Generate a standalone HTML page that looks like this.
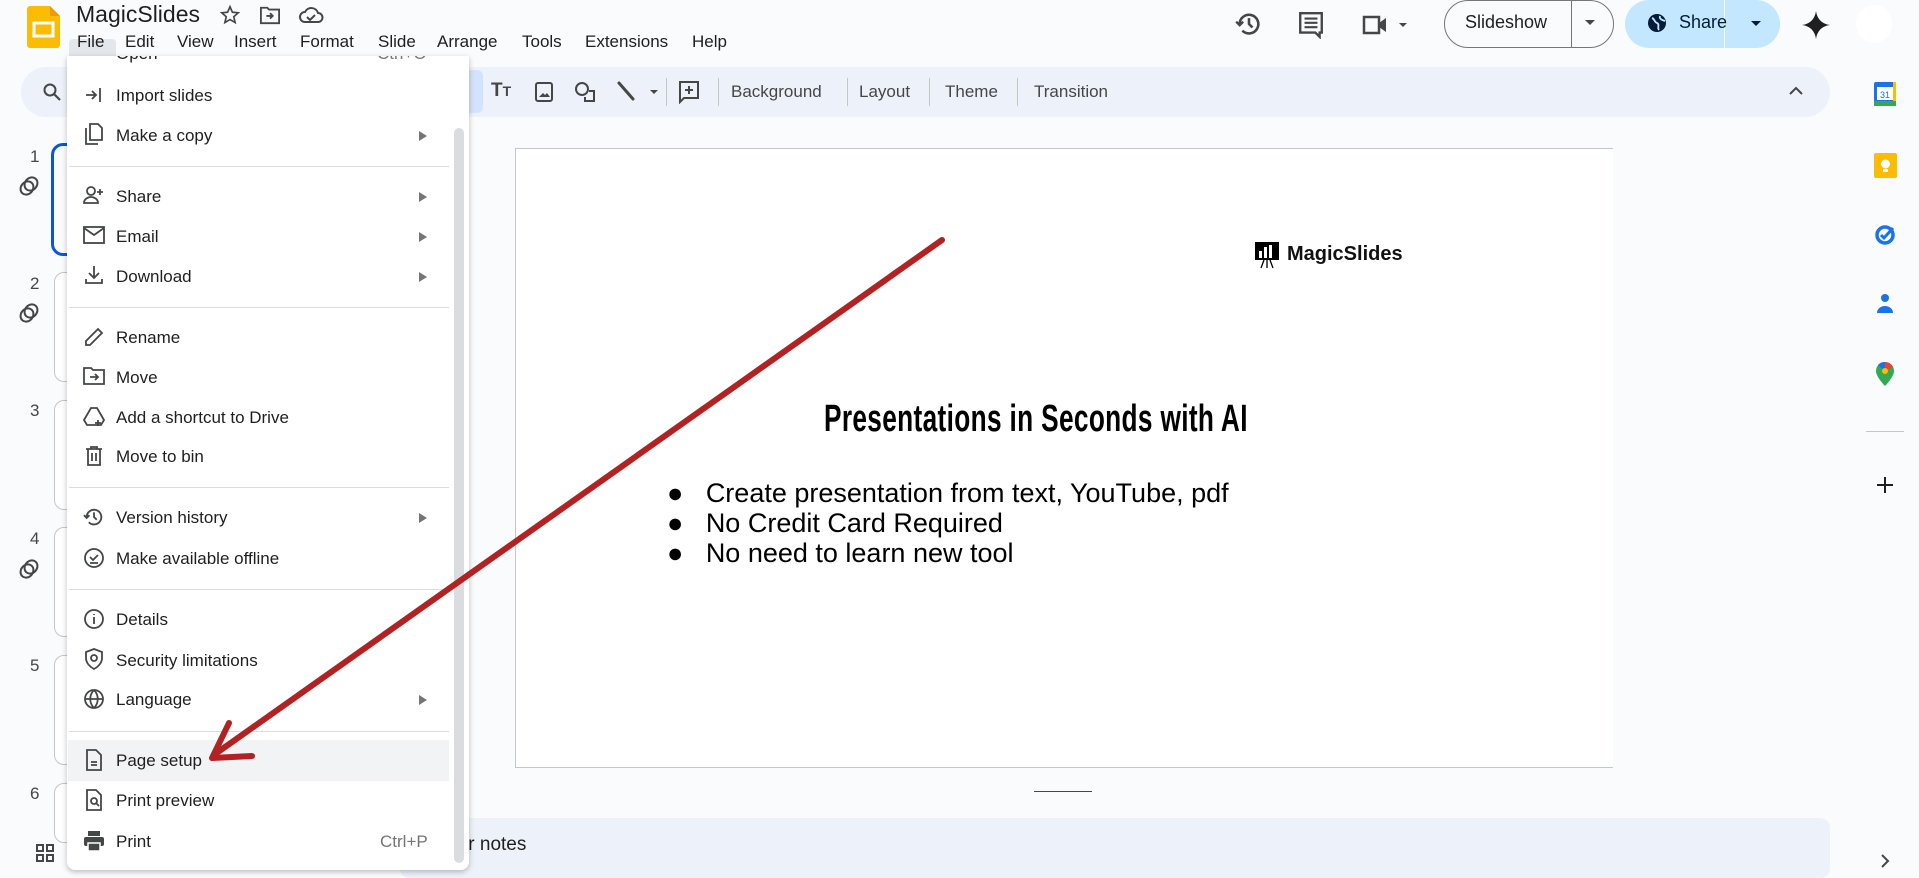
<!DOCTYPE html>
<html><head><meta charset="utf-8"><style>
*{box-sizing:border-box;margin:0;padding:0}
body{width:1919px;height:870px;overflow:hidden;background:#f9fbfd;font-family:"Liberation Sans",sans-serif;color:#1f1f1f;position:relative}
.a{position:absolute}
.menubar span{position:absolute;top:32px;font-size:17px;color:#1f1f1f}
.tb{position:absolute;left:21px;top:67px;width:1809px;height:50px;background:#edf2fa;border-radius:25px}
.tbt{position:absolute;top:82px;font-size:17px;color:#444746}
.sep{position:absolute;top:78px;width:1px;height:28px;background:#c4c7c5}
.menu{position:absolute;left:67px;top:56px;width:402px;height:814px;background:#fff;border-radius:0 0 8px 8px;box-shadow:0 2px 6px rgba(0,0,0,.25);overflow:hidden}
.it{position:absolute;left:49px;font-size:17px;color:#1f1f1f;margin-top:2px}
.ar{position:absolute;left:352px;width:0;height:0;border-top:5px solid transparent;border-bottom:5px solid transparent;border-left:8px solid #757575}
.ms{position:absolute;left:2px;width:380px;height:1px;background:#dadce0}
.ic{position:absolute;left:16px}
.num{position:absolute;left:30px;font-size:17px;color:#444746}
.th{position:absolute;left:54px;width:60px;border:1px solid #c4c7c5;border-radius:10px;background:#fff}
</style></head><body>
<svg class="a" style="left:27px;top:6px" width="33" height="42" viewBox="0 0 33 42"><path d="M3 0h20l10 10v29a3 3 0 0 1-3 3H3a3 3 0 0 1-3-3V3a3 3 0 0 1 3-3z" fill="#fbbc04"/><path d="M23 0l10 10H23z" fill="#f29900"/><rect x="7" y="17" width="19" height="13" fill="none" stroke="#fff" stroke-width="3"/></svg>
<div class="a" style="left:76px;top:1px;font-size:23px;color:#1f1f1f">MagicSlides</div>
<svg class="a" style="left:219px;top:4px" width="22" height="22" viewBox="0 0 24 24"><path d="M12 3l2.6 6 6.4.6-4.9 4.3 1.5 6.4L12 17l-5.6 3.3 1.5-6.4L3 9.6 9.4 9z" fill="none" stroke="#444746" stroke-width="1.8"/></svg>
<svg class="a" style="left:259px;top:5px" width="22" height="20" viewBox="0 0 24 22"><path d="M2 3h7l2 2h11v15H2z" fill="none" stroke="#444746" stroke-width="2"/><path d="M8 12h7m-3-3l3 3-3 3" stroke="#444746" stroke-width="2" fill="none"/></svg>
<svg class="a" style="left:298px;top:5px" width="26" height="20" viewBox="0 0 26 20"><path d="M7 17a5 5 0 0 1 0-10 7 7 0 0 1 13 1 4.5 4.5 0 0 1 0 9z" fill="none" stroke="#444746" stroke-width="2"/><path d="M9 12l3 3 5-5" fill="none" stroke="#444746" stroke-width="2"/></svg>
<div class="a" style="left:69px;top:39px;width:47px;height:28px;background:#e3e6ea;border-radius:4px 4px 0 0"></div>
<div class="menubar"><span style="left:77px">File</span><span style="left:125px">Edit</span><span style="left:177px">View</span><span style="left:234px">Insert</span><span style="left:300px">Format</span><span style="left:378px">Slide</span><span style="left:437px">Arrange</span><span style="left:522px">Tools</span><span style="left:585px">Extensions</span><span style="left:692px">Help</span></div>
<svg class="a" style="left:1235px;top:10px" width="28" height="28" viewBox="0 0 24 24"><path d="M4 12a8 8 0 1 1 2.3 5.7" fill="none" stroke="#444746" stroke-width="2.2"/><path d="M1 10l3 3 3-3" fill="none" stroke="#444746" stroke-width="2"/><path d="M12 7v5l3 3" fill="none" stroke="#444746" stroke-width="2.2"/></svg>
<svg class="a" style="left:1298px;top:11px" width="26" height="28" viewBox="0 0 24 26"><path d="M2 2h20v18h-2v4l-4-4H2z" fill="none" stroke="#444746" stroke-width="2.2"/><path d="M6 7h12M6 11h12M6 15h12" stroke="#444746" stroke-width="2"/></svg>
<svg class="a" style="left:1361px;top:13px" width="50" height="24" viewBox="0 0 50 24"><path d="M3 4h15v16H3z" fill="none" stroke="#444746" stroke-width="2.5"/><path d="M18 10l7-5v14l-7-5" fill="#444746"/><path d="M38 10h8l-4 4z" fill="#444746"/></svg>
<div class="a" style="left:1444px;top:0;width:170px;height:48px;border:1.5px solid #747775;border-radius:24px"></div>
<div class="a" style="left:1571px;top:0;width:1px;height:48px;background:#747775"></div>
<div class="a" style="left:1465px;top:12px;font-size:18px;color:#1f1f1f">Slideshow</div>
<svg class="a" style="left:1585px;top:19px" width="12" height="8"><path d="M0 1h10l-5 5z" fill="#444746"/></svg>
<div class="a" style="left:1625px;top:0;width:155px;height:48px;background:#c2e7ff;border-radius:24px"></div>
<div class="a" style="left:1724px;top:0;width:1px;height:48px;background:#f9fbfd"></div>
<svg class="a" style="left:1647px;top:13px" width="20" height="20" viewBox="0 0 20 20"><circle cx="10" cy="10" r="9" fill="#001d35"/><path d="M5 5c3 1 2 4 5 5s0 5 2 7M13 3c-1 3 2 4 5 5" stroke="#c2e7ff" stroke-width="1.8" fill="none"/></svg>
<div class="a" style="left:1679px;top:12px;font-size:18px;color:#001d35">Share</div>
<svg class="a" style="left:1751px;top:20px" width="12" height="8"><path d="M0 1h10l-5 5z" fill="#001d35"/></svg>
<svg class="a" style="left:1802px;top:11px" width="28" height="28" viewBox="0 0 28 28"><path d="M14 0C15 8 20 13 28 14 20 15 15 20 14 28 13 20 8 15 0 14 8 13 13 8 14 0z" fill="#1f1f1f"/></svg>
<div class="a" style="left:1856px;top:5px;width:36px;height:38px;border-radius:50%;background:#fff"></div>
<div class="tb"></div>
<svg class="a" style="left:42px;top:82px" width="20" height="20" viewBox="0 0 20 20"><circle cx="8" cy="8" r="5.5" fill="none" stroke="#444746" stroke-width="2"/><path d="M12 12l6 6" stroke="#444746" stroke-width="2.2"/></svg>
<div class="a" style="left:469px;top:70px;width:14px;height:43px;background:#d3e3fd;border-radius:0 6px 6px 0"></div>
<div class="tbt" style="left:491px;top:80px;font-weight:bold;font-size:19px">T<span style="font-size:14px">T</span></div>
<svg class="a" style="left:535px;top:82px" width="18" height="20" viewBox="0 0 18 20"><rect x="1" y="1" width="16" height="18" rx="2" fill="none" stroke="#444746" stroke-width="2"/><path d="M4 15l4-4 2 2 2-2 3 4z" fill="#444746"/></svg>
<svg class="a" style="left:574px;top:81px" width="22" height="22" viewBox="0 0 22 22"><circle cx="8" cy="8" r="6" fill="none" stroke="#444746" stroke-width="2"/><path d="M15 10h5v10h-9v-4" fill="none" stroke="#444746" stroke-width="2"/></svg>
<svg class="a" style="left:616px;top:80px" width="48" height="24" viewBox="0 0 48 24"><path d="M3 3l14 16" stroke="#444746" stroke-width="3" stroke-linecap="round"/><path d="M34 10h8l-4 4z" fill="#444746"/></svg>
<div class="sep" style="left:666px"></div>
<svg class="a" style="left:678px;top:80px" width="22" height="24" viewBox="0 0 22 24"><path d="M2 2h18v16H6l-4 4z" fill="none" stroke="#444746" stroke-width="2"/><path d="M11 6v8M7 10h8" stroke="#444746" stroke-width="2"/></svg>
<div class="sep" style="left:718px"></div>
<div class="tbt" style="left:731px">Background</div>
<div class="sep" style="left:847px"></div>
<div class="tbt" style="left:859px">Layout</div>
<div class="sep" style="left:929px"></div>
<div class="tbt" style="left:945px">Theme</div>
<div class="sep" style="left:1017px"></div>
<div class="tbt" style="left:1034px">Transition</div>
<svg class="a" style="left:1789px;top:86px" width="14" height="10"><path d="M1 8l6-6 6 6" fill="none" stroke="#444746" stroke-width="2"/></svg>
<div class="num" style="top:147px">1</div><div class="num" style="top:274px">2</div><div class="num" style="top:401px">3</div><div class="num" style="top:529px">4</div><div class="num" style="top:656px">5</div><div class="num" style="top:784px">6</div>
<div class="a" style="left:51px;top:143px;width:60px;height:113px;border:3px solid #0b57d0;border-radius:12px"></div>
<div class="th" style="top:272px;height:110px"></div><div class="th" style="top:400px;height:110px"></div><div class="th" style="top:527px;height:110px"></div><div class="th" style="top:655px;height:110px"></div><div class="th" style="top:783px;height:60px"></div>
<svg class="a" style="left:18px;top:175px" width="22" height="22" viewBox="0 0 22 22"><g fill="none" stroke="#444746" stroke-width="2"><ellipse cx="9" cy="13" rx="6" ry="7" transform="rotate(40 9 13)"/><ellipse cx="13" cy="9" rx="6" ry="7" transform="rotate(40 13 9)"/></g></svg>
<svg class="a" style="left:18px;top:302px" width="22" height="22" viewBox="0 0 22 22"><g fill="none" stroke="#444746" stroke-width="2"><ellipse cx="9" cy="13" rx="6" ry="7" transform="rotate(40 9 13)"/><ellipse cx="13" cy="9" rx="6" ry="7" transform="rotate(40 13 9)"/></g></svg>
<svg class="a" style="left:18px;top:558px" width="22" height="22" viewBox="0 0 22 22"><g fill="none" stroke="#444746" stroke-width="2"><ellipse cx="9" cy="13" rx="6" ry="7" transform="rotate(40 9 13)"/><ellipse cx="13" cy="9" rx="6" ry="7" transform="rotate(40 13 9)"/></g></svg>
<svg class="a" style="left:36px;top:844px" width="18" height="18" viewBox="0 0 18 18"><g fill="none" stroke="#444746" stroke-width="2"><rect x="1" y="1" width="6" height="6"/><rect x="11" y="1" width="6" height="6"/><rect x="1" y="11" width="6" height="6"/><rect x="11" y="11" width="6" height="6"/></g></svg>
<div class="a" style="left:515px;top:148px;width:1098px;height:620px;background:#fff;border-left:1px solid #c4c7c5;border-top:1px solid #c4c7c5;border-bottom:1px solid #c4c7c5"></div>
<svg class="a" style="left:1254px;top:241px" width="26" height="28" viewBox="0 0 26 28"><rect x="1" y="1" width="24" height="18" fill="#000"/><rect x="5" y="10" width="3" height="7" fill="#fff"/><rect x="10" y="6" width="3" height="11" fill="#fff"/><rect x="15" y="4" width="3" height="13" fill="#fff"/><path d="M13 19v8M10 19l-3 8M16 19l3 8" stroke="#000" stroke-width="1.3"/></svg>
<div class="a" style="left:1287px;top:243px;font-size:20px;font-weight:bold;color:#111">MagicSlides</div>
<div class="a" style="left:824px;top:398px;width:600px;font-size:38px;font-weight:bold;color:#000;transform:scaleX(.69);transform-origin:0 0;white-space:nowrap;letter-spacing:0.5px">Presentations in Seconds with AI</div>
<div class="a" style="left:667px;top:478px;font-size:27px;line-height:30px;color:#000">
<div>●&nbsp;&nbsp;&nbsp;Create presentation from text, YouTube, pdf</div>
<div>●&nbsp;&nbsp;&nbsp;No Credit Card Required</div>
<div>●&nbsp;&nbsp;&nbsp;No need to learn new tool</div></div>
<div class="a" style="left:1034px;top:791px;width:58px;height:1px;background:#444746"></div>
<div class="a" style="left:400px;top:818px;width:1430px;height:60px;background:#edf2fa;border-radius:10px"></div>
<div class="a" style="left:407px;top:834px;font-size:19px;color:#1f1f1f">speaker notes</div>
<svg class="a" style="left:1874px;top:82px" width="22" height="24" viewBox="0 0 22 24"><rect x="0" y="0" width="22" height="24" rx="2" fill="#1a73e8"/><rect x="3" y="5" width="16" height="13" fill="#fff"/><rect x="0" y="19" width="22" height="5" fill="#34a853"/><rect x="19" y="0" width="3" height="19" fill="#fbbc04"/><text x="6" y="16" font-size="9" fill="#1a73e8" font-family="Liberation Sans">31</text></svg>
<svg class="a" style="left:1874px;top:153px" width="23" height="25" viewBox="0 0 23 25"><rect width="23" height="25" rx="2" fill="#fbbc04"/><circle cx="11.5" cy="11" r="4.5" fill="#fff"/><rect x="9" y="16" width="5" height="3" fill="#fff"/></svg>
<svg class="a" style="left:1874px;top:222px" width="22" height="24" viewBox="0 0 22 24"><circle cx="11" cy="13" r="8" fill="none" stroke="#1a73e8" stroke-width="3.5"/><path d="M7 13l3 3 9-10" fill="none" stroke="#1a73e8" stroke-width="3"/></svg>
<svg class="a" style="left:1877px;top:293px" width="16" height="22" viewBox="0 0 16 22"><circle cx="8" cy="5" r="4" fill="#1a73e8"/><path d="M0 20a8 7 0 0 1 16 0z" fill="#1a73e8"/></svg>
<svg class="a" style="left:1876px;top:362px" width="18" height="24" viewBox="0 0 18 24"><path d="M9 0a9 9 0 0 0-9 9c0 6 9 15 9 15s9-9 9-15a9 9 0 0 0-9-9z" fill="#34a853"/><path d="M9 0a9 9 0 0 0-7 3l7 6z" fill="#1a73e8"/><path d="M9 0a9 9 0 0 1 8 5L9 9z" fill="#ea4335"/><circle cx="9" cy="9" r="3" fill="#fbbc04"/></svg>
<div class="a" style="left:1866px;top:431px;width:38px;height:1px;background:#c4c7c5"></div>
<svg class="a" style="left:1876px;top:476px" width="18" height="18"><path d="M9 1v16M1 9h16" stroke="#1f1f1f" stroke-width="2"/></svg>
<svg class="a" style="left:1880px;top:854px" width="10" height="14"><path d="M2 1l6 6-6 6" fill="none" stroke="#444746" stroke-width="2"/></svg>
<div class="menu">
<div class="a" style="left:1px;top:684px;width:381px;height:41px;background:#f1f3f4"></div>
<div class="it" style="top:-14px">Open</div><div class="a" style="left:310px;top:-12px;font-size:17px;color:#757575">Ctrl+O</div>
<div class="it" style="top:28px">Import slides</div>
<div class="it" style="top:68px">Make a copy</div><div class="ar" style="top:75px"></div>
<div class="ms" style="top:110px"></div>
<div class="it" style="top:129px">Share</div><div class="ar" style="top:136px"></div>
<div class="it" style="top:169px">Email</div><div class="ar" style="top:176px"></div>
<div class="it" style="top:209px">Download</div><div class="ar" style="top:216px"></div>
<div class="ms" style="top:251px"></div>
<div class="it" style="top:270px">Rename</div>
<div class="it" style="top:310px">Move</div>
<div class="it" style="top:350px">Add a shortcut to Drive</div>
<div class="it" style="top:389px">Move to bin</div>
<div class="ms" style="top:431px"></div>
<div class="it" style="top:450px">Version history</div><div class="ar" style="top:457px"></div>
<div class="it" style="top:491px">Make available offline</div>
<div class="ms" style="top:533px"></div>
<div class="it" style="top:552px">Details</div>
<div class="it" style="top:593px">Security limitations</div>
<div class="it" style="top:632px">Language</div><div class="ar" style="top:639px"></div>
<div class="ms" style="top:675px"></div>
<div class="it" style="top:693px">Page setup</div>
<div class="it" style="top:733px">Print preview</div>
<div class="it" style="top:774px">Print</div><div class="a" style="left:313px;top:776px;font-size:17px;color:#757575">Ctrl+P</div>
<div class="a" style="left:387px;top:72px;width:10px;height:735px;background:#dadce0;border-radius:5px"></div>
<svg class="ic" style="top:28px" width="22" height="22" viewBox="0 0 22 22" fill="none" stroke="#444746" stroke-width="1.8"><path d="M3 11h10m-4-4l4 4-4 4M17 4v14"/></svg>
<svg class="ic" style="top:66px" width="22" height="24" viewBox="0 0 22 24" fill="none" stroke="#444746" stroke-width="1.8"><path d="M7 2h8l4 4v12H7z M3 6v16h12"/></svg>
<svg class="ic" style="top:128px" width="22" height="22" viewBox="0 0 22 22" fill="none" stroke="#444746" stroke-width="1.8"><circle cx="8" cy="7" r="4"/><path d="M1 19c0-4 4-6 7-6s7 2 7 6zM17 5v6M14 8h6"/></svg>
<svg class="ic" style="top:169px" width="22" height="20" viewBox="0 0 22 20" fill="none" stroke="#444746" stroke-width="1.8"><rect x="1" y="2" width="20" height="16"/><path d="M1 3l10 7 10-7"/></svg>
<svg class="ic" style="top:208px" width="22" height="22" viewBox="0 0 22 22" fill="none" stroke="#444746" stroke-width="1.8"><path d="M11 2v12m-5-5l5 5 5-5M3 15v4h16v-4"/></svg>
<svg class="ic" style="top:270px" width="22" height="22" viewBox="0 0 22 22" fill="none" stroke="#444746" stroke-width="1.8"><path d="M3 19v-4L15 3l4 4L7 19z"/></svg>
<svg class="ic" style="top:310px" width="22" height="20" viewBox="0 0 22 20" fill="none" stroke="#444746" stroke-width="1.8"><path d="M1 2h7l2 2h11v14H1z M7 11h8m-3-3l3 3-3 3"/></svg>
<svg class="ic" style="top:350px" width="22" height="22" viewBox="0 0 22 22" fill="none" stroke="#444746" stroke-width="1.8"><path d="M8 2h6l7 12-3 5H4l-3-5z M15 14v6M12 17h6"/></svg>
<svg class="ic" style="top:389px" width="22" height="22" viewBox="0 0 22 22" fill="none" stroke="#444746" stroke-width="1.8"><path d="M3 4h16M8 4V2h6v2M5 4v16h12V4M9 8v8M13 8v8"/></svg>
<svg class="ic" style="top:450px" width="22" height="22" viewBox="0 0 24 24" fill="none" stroke="#444746" stroke-width="2"><path d="M4 12a8 8 0 1 1 2.3 5.7M1 10l3 3 3-3M12 7v5l3 3"/></svg>
<svg class="ic" style="top:491px" width="22" height="22" viewBox="0 0 22 22" fill="none" stroke="#444746" stroke-width="1.8"><circle cx="11" cy="11" r="9"/><path d="M7 10l3 3 5-5M7 16h8"/></svg>
<svg class="ic" style="top:552px" width="22" height="22" viewBox="0 0 22 22" fill="none" stroke="#444746" stroke-width="1.8"><circle cx="11" cy="11" r="9"/><path d="M11 9v7M11 6v1"/></svg>
<svg class="ic" style="top:592px" width="22" height="22" viewBox="0 0 22 22" fill="none" stroke="#444746" stroke-width="1.8"><path d="M11 1l8 3v6c0 5-4 9-8 11-4-2-8-6-8-11V4z"/><circle cx="11" cy="10" r="3"/></svg>
<svg class="ic" style="top:632px" width="22" height="22" viewBox="0 0 22 22" fill="none" stroke="#444746" stroke-width="1.8"><circle cx="11" cy="11" r="9"/><path d="M2 11h18M11 2c-5 5-5 13 0 18M11 2c5 5 5 13 0 18"/></svg>
<svg class="ic" style="top:693px" width="22" height="22" viewBox="0 0 22 22" fill="none" stroke="#444746" stroke-width="1.8"><path d="M4 1h9l5 5v15H4z M8 13h6M8 16h6"/></svg>
<svg class="ic" style="top:733px" width="22" height="22" viewBox="0 0 22 22" fill="none" stroke="#444746" stroke-width="1.8"><path d="M4 1h9l5 5v15H4z"/><circle cx="11" cy="12" r="3"/><path d="M13 14l3 3"/></svg>
<svg class="ic" style="top:774px" width="22" height="22" viewBox="0 0 22 22"><path d="M5 1h12v5H5z" fill="#444746"/><rect x="1" y="7" width="20" height="9" rx="2" fill="#444746"/><rect x="5" y="13" width="12" height="8" fill="#444746" stroke="#fff" stroke-width="1.5"/></svg>
</div>
<svg class="a" style="left:0;top:0" width="1919" height="870" viewBox="0 0 1919 870"><g stroke="#b22222" stroke-width="6" stroke-linecap="round" fill="none"><path d="M942 240L218 752"/><path d="M212 758l40-2M212 758l17-35"/></g></svg>
</body></html>
